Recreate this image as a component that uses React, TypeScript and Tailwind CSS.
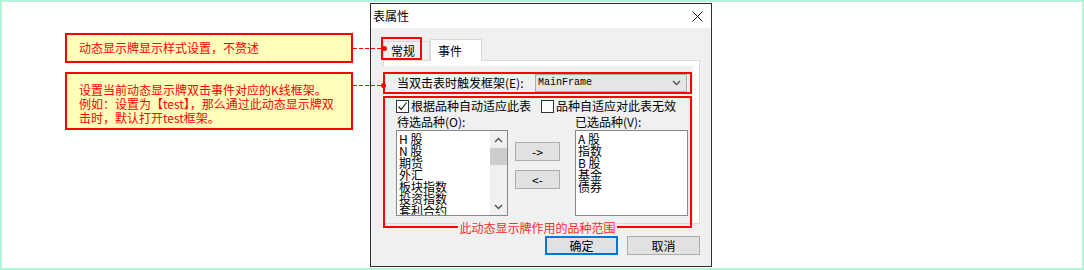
import React from "react";

const leftItems = ["H 股", "N 股", "期货", "外汇", "板块指数", "投资指数", "套利合约"];
const rightItems = ["A 股", "指数", "B 股", "基金", "债券"];

function Check({ checked }: { checked?: boolean }) {
  return (
    <span className="w-[13px] h-[13px] border border-[#333] bg-white flex items-center justify-center shrink-0">
      {checked ? (
        <svg width="11" height="11" viewBox="0 0 11 11">
          <polyline points="1.5,5.5 4.2,8.5 9.5,1.5" fill="none" stroke="#222" strokeWidth="1.2" />
        </svg>
      ) : null}
    </span>
  );
}

function Chevron({ up }: { up?: boolean }) {
  return (
    <svg width="9" height="6" viewBox="0 0 9 6">
      <polyline
        points={up ? "1,5 4.5,1.5 8,5" : "1,1 4.5,4.5 8,1"}
        fill="none"
        stroke="#555"
        strokeWidth="1.4"
      />
    </svg>
  );
}

export default function App() {
  return (
    <div className="relative w-[1084px] h-[270px] border-2 border-[#b3f4d8] bg-white flex items-start font-['Noto_Sans_CJK_SC',sans-serif] text-[12px] text-black">
      {/* annotations */}
      <div className="ml-[63px] mt-[31px] w-[288px] flex flex-col gap-[9px] text-[#ff0000]">
        <div className="h-[30px] border-2 border-[#ff0000] bg-[#ffffbb] flex items-center pl-[12px] leading-[14px]">
          动态显示牌显示样式设置，不赘述
        </div>
        <div className="h-[58px] border-2 border-[#ff0000] bg-[#ffffbb] pl-[12px] pt-[9px] leading-[14px]">
          <p>设置当前动态显示牌双击事件对应的K线框架。</p>
          <p>例如：设置为【test】，那么通过此动态显示牌双</p>
          <p>击时，默认打开test框架。</p>
        </div>
      </div>

      {/* dialog */}
      <div className="ml-[17px] mt-px w-[342px] h-[264px] border border-[#2e2e2e] bg-[#f0f0f0] flex flex-col">
        <div className="h-[24px] bg-white flex items-center justify-between pl-[2px] pr-[8px]">
          <span className="leading-[14px]">表属性</span>
          <svg width="11" height="11" viewBox="0 0 11 11">
            <path d="M0.5 0.5 L10.5 10.5 M10.5 0.5 L0.5 10.5" stroke="#111" strokeWidth="1" />
          </svg>
        </div>

        <div className="flex-1 pl-[12px] pr-[11px] pt-[11px] flex flex-col">
          <div className="h-[21px] flex items-end">
            <div className="w-[47px] h-[19px] border border-b-0 border-[#d9d9d9] bg-[#f0f0f0] flex items-center pl-[7px] leading-[14px]">
              常规
            </div>
            <div className="w-[52px] h-[22px] -mb-px relative z-10 border border-b-0 border-[#d9d9d9] bg-white flex items-center pl-[7px] leading-[14px]">
              事件
            </div>
          </div>

          <div className="h-[164px] border border-[#d9d9d9] bg-white pt-[5px] pr-[6px]">
            <div className="h-full bg-[#f0f0f0] pt-[6px] -ml-px">
              <div className="w-[309px] h-[22px] border-2 border-[#ff0000] flex items-center pl-[12px] pr-[3px] justify-between">
                <span className="leading-[14px]">当双击表时触发框架(E):</span>
                <div className="w-[152px] h-[18px] border border-[#adadad] bg-[#e5e5e5] flex items-center justify-between pl-[2px] pr-[5px]">
                  <span className="font-['Liberation_Mono',monospace] text-[10px] leading-[12px]">MainFrame</span>
                  <Chevron />
                </div>
              </div>

              <div className="relative mt-[2px] w-[309px] h-[132px] border-2 border-[#ff0000] pl-[11px] pt-px">
                <div className="h-[14px] flex items-center leading-[14px]">
                  <Check checked />
                  <span className="ml-[2px]">根据品种自动适应此表</span>
                  <span className="ml-[10px]">
                    <Check />
                  </span>
                  <span className="ml-[2px]">品种自适应对此表无效</span>
                </div>
                <div className="h-[15px] mt-px flex items-center leading-[14px]">
                  <span className="w-[179px] pl-px">待选品种(O):</span>
                  <span>已选品种(V):</span>
                </div>
                <div className="mt-px flex items-start">
                  <div className="w-[112px] h-[86px] border border-[#828790] bg-white flex overflow-hidden">
                    <div className="flex-1 pl-[2px] pt-[2px] leading-[12px]">
                      {leftItems.map((t) => (
                        <div key={t}>{t}</div>
                      ))}
                    </div>
                    <div className="w-[17px] bg-[#f0f0f0] flex flex-col items-center">
                      <div className="h-[17px] flex items-center">
                        <Chevron up />
                      </div>
                      <div className="w-[17px] h-[17px] bg-[#cdcdcd]" />
                      <div className="flex-1" />
                      <div className="h-[17px] flex items-center">
                        <Chevron />
                      </div>
                    </div>
                  </div>
                  <div className="ml-[7px] mt-[12px] flex flex-col gap-[9px]">
                    <div className="w-[45px] h-[19px] border border-[#adadad] bg-[#e1e1e1] flex items-center justify-center leading-[14px]">
                      -&gt;
                    </div>
                    <div className="w-[45px] h-[19px] border border-[#adadad] bg-[#e1e1e1] flex items-center justify-center leading-[14px]">
                      &lt;-
                    </div>
                  </div>
                  <div className="ml-[15px] w-[113px] h-[86px] border border-[#828790] bg-white pl-[2px] pt-[2px] leading-[12px]">
                    {rightItems.map((t) => (
                      <div key={t}>{t}</div>
                    ))}
                  </div>
                </div>
                <div className="absolute left-0 right-0 -bottom-[9px] flex justify-center">
                  <span className="bg-[#f0f0f0] text-[#ff2a2a] leading-[14px] px-px">此动态显示牌作用的品种范围</span>
                </div>
              </div>
            </div>
          </div>

          <div className="mt-[12px] flex justify-end gap-[9px]">
            <div className="w-[73px] h-[19px] border-2 border-[#0078d7] bg-[#e1e1e1] flex items-center justify-center leading-[14px]">
              确定
            </div>
            <div className="w-[73px] h-[19px] border border-[#adadad] bg-[#e1e1e1] flex items-center justify-center leading-[14px]">
              取消
            </div>
          </div>
        </div>
      </div>

      {/* connectors and tab highlight */}
      <svg className="absolute left-[-2px] top-[-2px] pointer-events-none" width="1084" height="270">
        <line x1="353" y1="48.5" x2="383" y2="48.5" stroke="#ff0000" strokeWidth="1" strokeDasharray="4 2" />
        <circle cx="384.5" cy="48.5" r="2.5" fill="#ff0000" />
        <line x1="353" y1="85.5" x2="382" y2="85.5" stroke="#ff0000" strokeWidth="1" strokeDasharray="4 2" />
        <circle cx="383.5" cy="85.5" r="2.5" fill="#ff0000" />
        <rect x="382" y="38" width="39" height="21" fill="none" stroke="#ff0000" strokeWidth="2" />
      </svg>
    </div>
  );
}
